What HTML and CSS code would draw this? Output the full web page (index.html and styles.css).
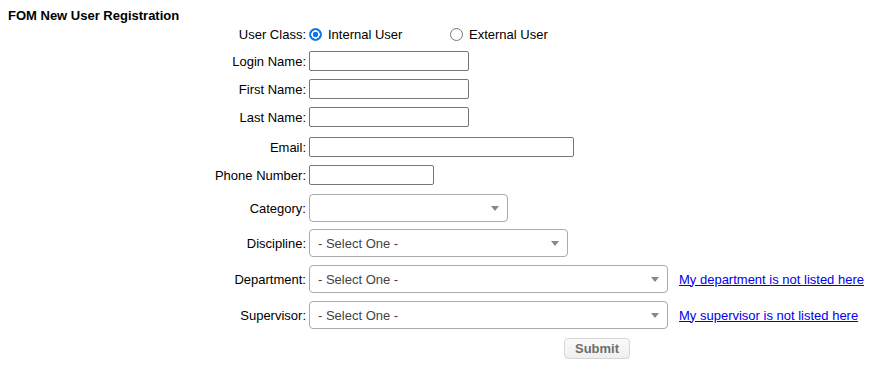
FILE: index.html
```html
<!DOCTYPE html>
<html lang="en">
<head>
  <meta charset="UTF-8" />
  <title>FOM New User Registration</title>
  <link rel="stylesheet" href="styles.css">
</head>
<body>
  <h1 class="page-title">FOM New User Registration</h1>

  <form class="reg-form">
    <div class="row row-class">
      <span class="label">User Class:</span>
      <div class="field radios">
        <label class="radio-opt internal"><span class="radio checked"></span>Internal User</label>
        <label class="radio-opt"><span class="radio"></span>External User</label>
      </div>
    </div>

    <div class="row row-text">
      <span class="label">Login Name:</span>
      <div class="field"><input type="text" class="text w-160"></div>
    </div>
    <div class="row row-text">
      <span class="label">First Name:</span>
      <div class="field"><input type="text" class="text w-160"></div>
    </div>
    <div class="row row-text">
      <span class="label">Last Name:</span>
      <div class="field"><input type="text" class="text w-160"></div>
    </div>
    <div class="row row-email">
      <span class="label">Email:</span>
      <div class="field"><input type="text" class="text w-265"></div>
    </div>
    <div class="row row-phone">
      <span class="label">Phone Number:</span>
      <div class="field"><input type="text" class="text w-125"></div>
    </div>

    <div class="row row-cat">
      <span class="label">Category:</span>
      <div class="field"><div class="select w-199"><span class="value"></span><span class="arrow"></span></div></div>
    </div>
    <div class="row row-disc">
      <span class="label">Discipline:</span>
      <div class="field"><div class="select w-259"><span class="value">- Select One -</span><span class="arrow"></span></div></div>
    </div>
    <div class="row row-dept">
      <span class="label">Department:</span>
      <div class="field"><div class="select w-359"><span class="value">- Select One -</span><span class="arrow"></span></div></div>
      <a href="#" class="extra">My department is not listed here</a>
    </div>
    <div class="row row-sup">
      <span class="label">Supervisor:</span>
      <div class="field"><div class="select w-359"><span class="value">- Select One -</span><span class="arrow"></span></div></div>
      <a href="#" class="extra">My supervisor is not listed here</a>
    </div>

    <div class="row row-submit">
      <button type="button" class="submit-btn">Submit</button>
    </div>
  </form>
</body>
</html>
```

FILE: styles.css
```css
body {
  margin: 8px;
  font-family: 'Liberation Sans', Arial, sans-serif;
  font-size: 13px;
  color: #000;
  background: #fff;
}

.page-title {
  font-size: 13px;
  font-weight: bold;
  margin: 0;
  line-height: 15px;
  height: 14px;
}

.reg-form {
  display: flex;
  flex-direction: column;
}

.row {
  display: flex;
  align-items: center;
}

.label {
  width: 298px;
  text-align: right;
  flex-shrink: 0;
}

.field {
  margin-left: 3px;
  display: flex;
  align-items: center;
}

.row-class { height: 25px; }
.row-text { height: 28px; }
.row-email { height: 32px; }
.row-phone { height: 24px; }
.row-cat { height: 42px; }
.row-disc { height: 28px; }
.row-dept { height: 44px; }
.row-sup { height: 28px; }
.row-submit { height: 38px; }

/* radios */
.radio-opt {
  display: flex;
  align-items: center;
}

.radio-opt.internal {
  width: 141px;
}

.radio {
  width: 11px;
  height: 11px;
  border: 1px solid #767676;
  border-radius: 50%;
  margin-right: 6px;
  background: #fff;
  box-sizing: content-box;
}

.radio.checked {
  border: 1px solid #0a77f0;
  background: radial-gradient(circle, #0a77f0 0 2.5px, #fff 3px 4px, #0a77f0 4.5px);
}

/* text inputs */
.text {
  height: 20px;
  box-sizing: border-box;
  border: 1px solid #767676;
  border-radius: 2px;
  padding: 0 3px;
  margin: 0;
  font: inherit;
}

.w-160 { width: 160px; }
.w-265 { width: 265px; }
.w-125 { width: 125px; }

/* selects */
.select {
  position: relative;
  height: 28px;
  box-sizing: border-box;
  border: 1px solid #aaa;
  border-radius: 4px;
  background: #fff;
  display: flex;
  align-items: center;
  padding-left: 8px;
  color: #444;
}

.select .arrow {
  position: absolute;
  right: 8px;
  top: 11px;
  width: 0;
  height: 0;
  border-left: 4px solid transparent;
  border-right: 4px solid transparent;
  border-top: 5px solid #888;
}

.w-199 { width: 199px; }
.w-259 { width: 259px; }
.w-359 { width: 359px; }

.extra {
  margin-left: 11px;
  color: #0000ee;
  text-decoration: underline;
}

/* submit */
.submit-btn {
  margin-left: 556px;
  width: 66px;
  height: 21px;
  border: 1px solid #d6d6d6;
  border-radius: 4px;
  background: linear-gradient(#fafafa, #efefef);
  color: #6d6d6d;
  font: bold 13px 'Liberation Sans', Arial, sans-serif;
  padding: 0;
}
```
